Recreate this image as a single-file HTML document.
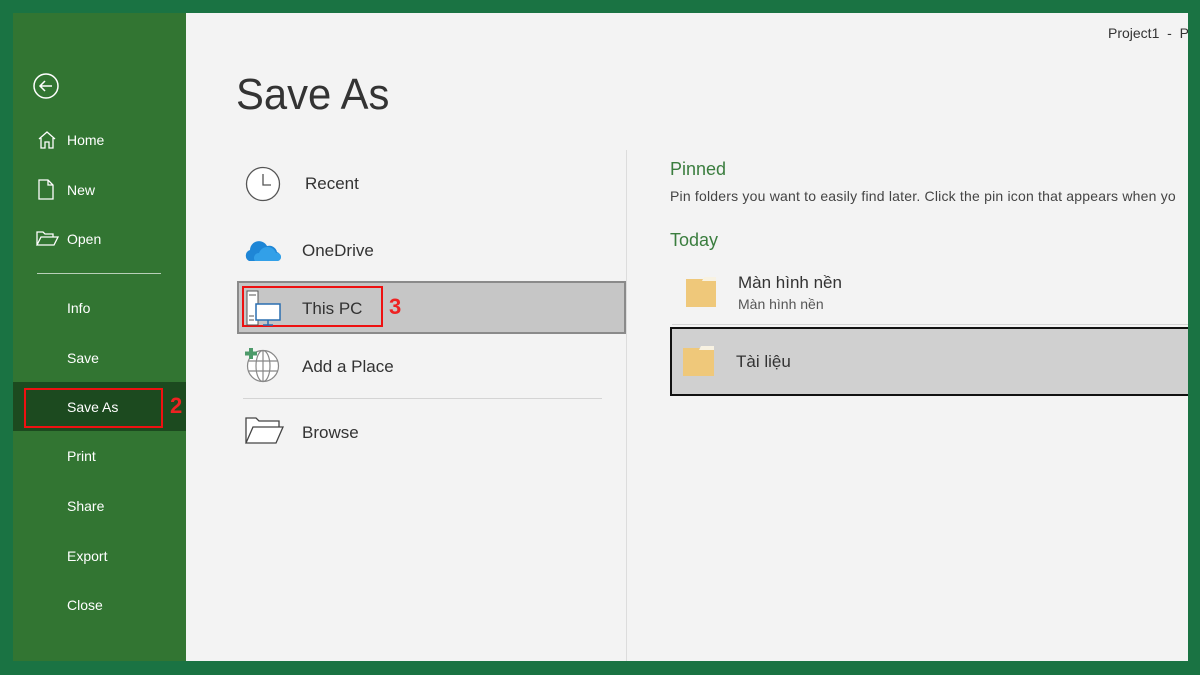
<!DOCTYPE html>
<html><head><meta charset="utf-8"><style>
body{margin:0;width:1200px;height:675px;background:#1a7343;position:relative;overflow:hidden;font-family:"Liberation Sans",sans-serif}
.abs{position:absolute}
#side{left:13px;top:13px;width:173px;height:648px;background:#327532}
#main{left:186px;top:13px;width:1002px;height:648px;background:#f3f3f3}
.nav{position:absolute;left:67px;color:#fff;font-size:14px}
.t{position:absolute;color:#333;font-size:17px}
</style></head><body>
<div id="side" class="abs"></div>
<div id="main" class="abs"></div>
<svg class="abs" style="left:32px;top:73px" width="28" height="28"><circle cx="14" cy="13" r="12" fill="none" stroke="#fff" stroke-width="1.5"/><path d="M20 13H8M13 8l-5 5 5 5" fill="none" stroke="#fff" stroke-width="1.5"/></svg>
<svg class="abs" style="left:37px;top:130px" width="20" height="20"><path d="M2 9L10 2l8 7M4 8v10h4v-6h4v6h4V8" fill="none" stroke="#fff" stroke-width="1.3"/></svg>
<div class="nav" style="top:132px">Home</div>
<svg class="abs" style="left:38px;top:179px" width="18" height="22"><path d="M1 1h9l5 5v14H1z M10 1v5h5" fill="none" stroke="#fff" stroke-width="1.3"/></svg>
<div class="nav" style="top:182px">New</div>
<svg class="abs" style="left:36px;top:230px" width="24" height="18"><path d="M1 15V2h6l2 2h8v3M1 15l4-8h17l-4 8z" fill="none" stroke="#fff" stroke-width="1.3"/></svg>
<div class="nav" style="top:231px">Open</div>
<div class="abs" style="left:37px;top:273px;width:124px;height:1px;background:#b8d0b8"></div>
<div class="nav" style="top:300px">Info</div>
<div class="nav" style="top:350px">Save</div>
<div class="abs" style="left:13px;top:382px;width:173px;height:49px;background:#1c4a1f"></div>
<div class="abs" style="left:24px;top:388px;width:139px;height:40px;border:2px solid #e11;box-sizing:border-box"></div>
<div class="nav" style="top:399px">Save As</div>
<div class="abs" style="left:170px;top:393px;color:#e22;font-weight:bold;font-size:22px">2</div>
<div class="nav" style="top:448px">Print</div>
<div class="nav" style="top:498px">Share</div>
<div class="nav" style="top:548px">Export</div>
<div class="nav" style="top:597px">Close</div>
<div class="abs" style="left:1108px;top:25px;font-size:14px;color:#333">Project1 &nbsp;- &nbsp;P</div>
<div class="abs" style="left:236px;top:70px;font-size:44px;color:#333;transform:scaleX(0.95);transform-origin:left">Save As</div>
<svg class="abs" style="left:245px;top:166px" width="36" height="36"><circle cx="18" cy="18" r="16.5" fill="#fff" stroke="#555" stroke-width="1.3"/><path d="M18 8v11h8" fill="none" stroke="#555" stroke-width="1.3"/></svg>
<div class="t" style="left:305px;top:174px">Recent</div>
<svg class="abs" style="left:245px;top:237px" width="36" height="26"><path d="M4 24a6 6 0 0 1 1-11 9 9 0 0 1 17-4 8 8 0 0 1 10 6 5 5 0 0 1 1 9z" fill="#1e86d6"/><path d="M10 24a5 5 0 0 1 4-8 9 9 0 0 1 17 0 4 4 0 0 1 2 8z" fill="#32a0e8"/></svg>
<div class="t" style="left:302px;top:241px">OneDrive</div>
<div class="abs" style="left:237px;top:281px;background:#c6c6c6;border:2px solid #8a8a8a;box-sizing:border-box;width:389px;height:53px"></div>
<div class="abs" style="left:242px;top:286px;width:141px;height:41px;border:2px solid #e11;box-sizing:border-box"></div>
<svg class="abs" style="left:245px;top:290px" width="40" height="38"><rect x="2" y="1" width="11" height="34" fill="#fff" stroke="#555"/><path d="M4 5h7M4 26h5M4 30h5" stroke="#555"/><rect x="11" y="14" width="24" height="16" fill="#fff" stroke="#2a6fb0" stroke-width="1.5"/><path d="M23 30v5M18 35h10" stroke="#2a6fb0" stroke-width="1.5"/></svg>
<div class="t" style="left:302px;top:299px">This PC</div>
<div class="abs" style="left:389px;top:294px;color:#e22;font-weight:bold;font-size:22px">3</div>
<svg class="abs" style="left:243px;top:347px" width="40" height="36"><circle cx="20" cy="19" r="15.5" fill="#fff" stroke="#888" stroke-width="1.2"/><ellipse cx="20" cy="19" rx="7" ry="15.5" fill="none" stroke="#888" stroke-width="1.2"/><path d="M5 14h30M5 24h30M20 3v31" stroke="#888" stroke-width="1.2"/><path d="M8 1v11M2 6.5h12" stroke="#4d9a6a" stroke-width="4"/></svg>
<div class="t" style="left:302px;top:357px">Add a Place</div>
<div class="abs" style="left:243px;top:398px;width:359px;height:1px;background:#d4d4d4"></div>
<svg class="abs" style="left:245px;top:417px" width="40" height="28"><path d="M1 26V1h10l3 3h20v6M1 26l7-16h30l-7 16z" fill="#fff" stroke="#444" stroke-width="1.3"/></svg>
<div class="t" style="left:302px;top:423px">Browse</div>
<div class="abs" style="left:626px;top:150px;width:1px;height:511px;background:#dcdcdc"></div>
<div class="abs" style="left:670px;top:159px;font-size:18px;color:#3a7d3e">Pinned</div>
<div class="abs" style="left:670px;top:188px;font-size:14px;color:#444;white-space:nowrap;letter-spacing:0.2px">Pin folders you want to easily find later. Click the pin icon that appears when yo</div>
<div class="abs" style="left:670px;top:230px;font-size:18px;color:#3a7d3e">Today</div>
<svg class="abs" style="left:684px;top:275px" width="36" height="33"><path d="M2 4h30v28H2z" fill="#efc87a"/><path d="M20 2h12v4H18z" fill="#f8f2e2"/></svg>
<div class="abs" style="left:738px;top:273px;font-size:17px;color:#333">Màn hình nền</div>
<div class="abs" style="left:738px;top:296px;font-size:14px;color:#555">Màn hình nền</div>
<div class="abs" style="left:672px;top:324px;width:516px;height:1px;background:#d4d4d4"></div>
<div class="abs" style="left:670px;top:327px;width:530px;height:69px;background:#d0d0d0;border:2px solid #111;box-sizing:border-box"></div>
<svg class="abs" style="left:681px;top:345px" width="36" height="32"><path d="M2 3h31v28H2z" fill="#efc87a"/><path d="M20 1h13v4H18z" fill="#f8f2e2"/></svg>
<div class="abs" style="left:736px;top:352px;font-size:17px;color:#333">Tài liệu</div>
<div class="abs" style="left:1188px;top:0;width:12px;height:675px;background:#1a7343"></div>
</body></html>
